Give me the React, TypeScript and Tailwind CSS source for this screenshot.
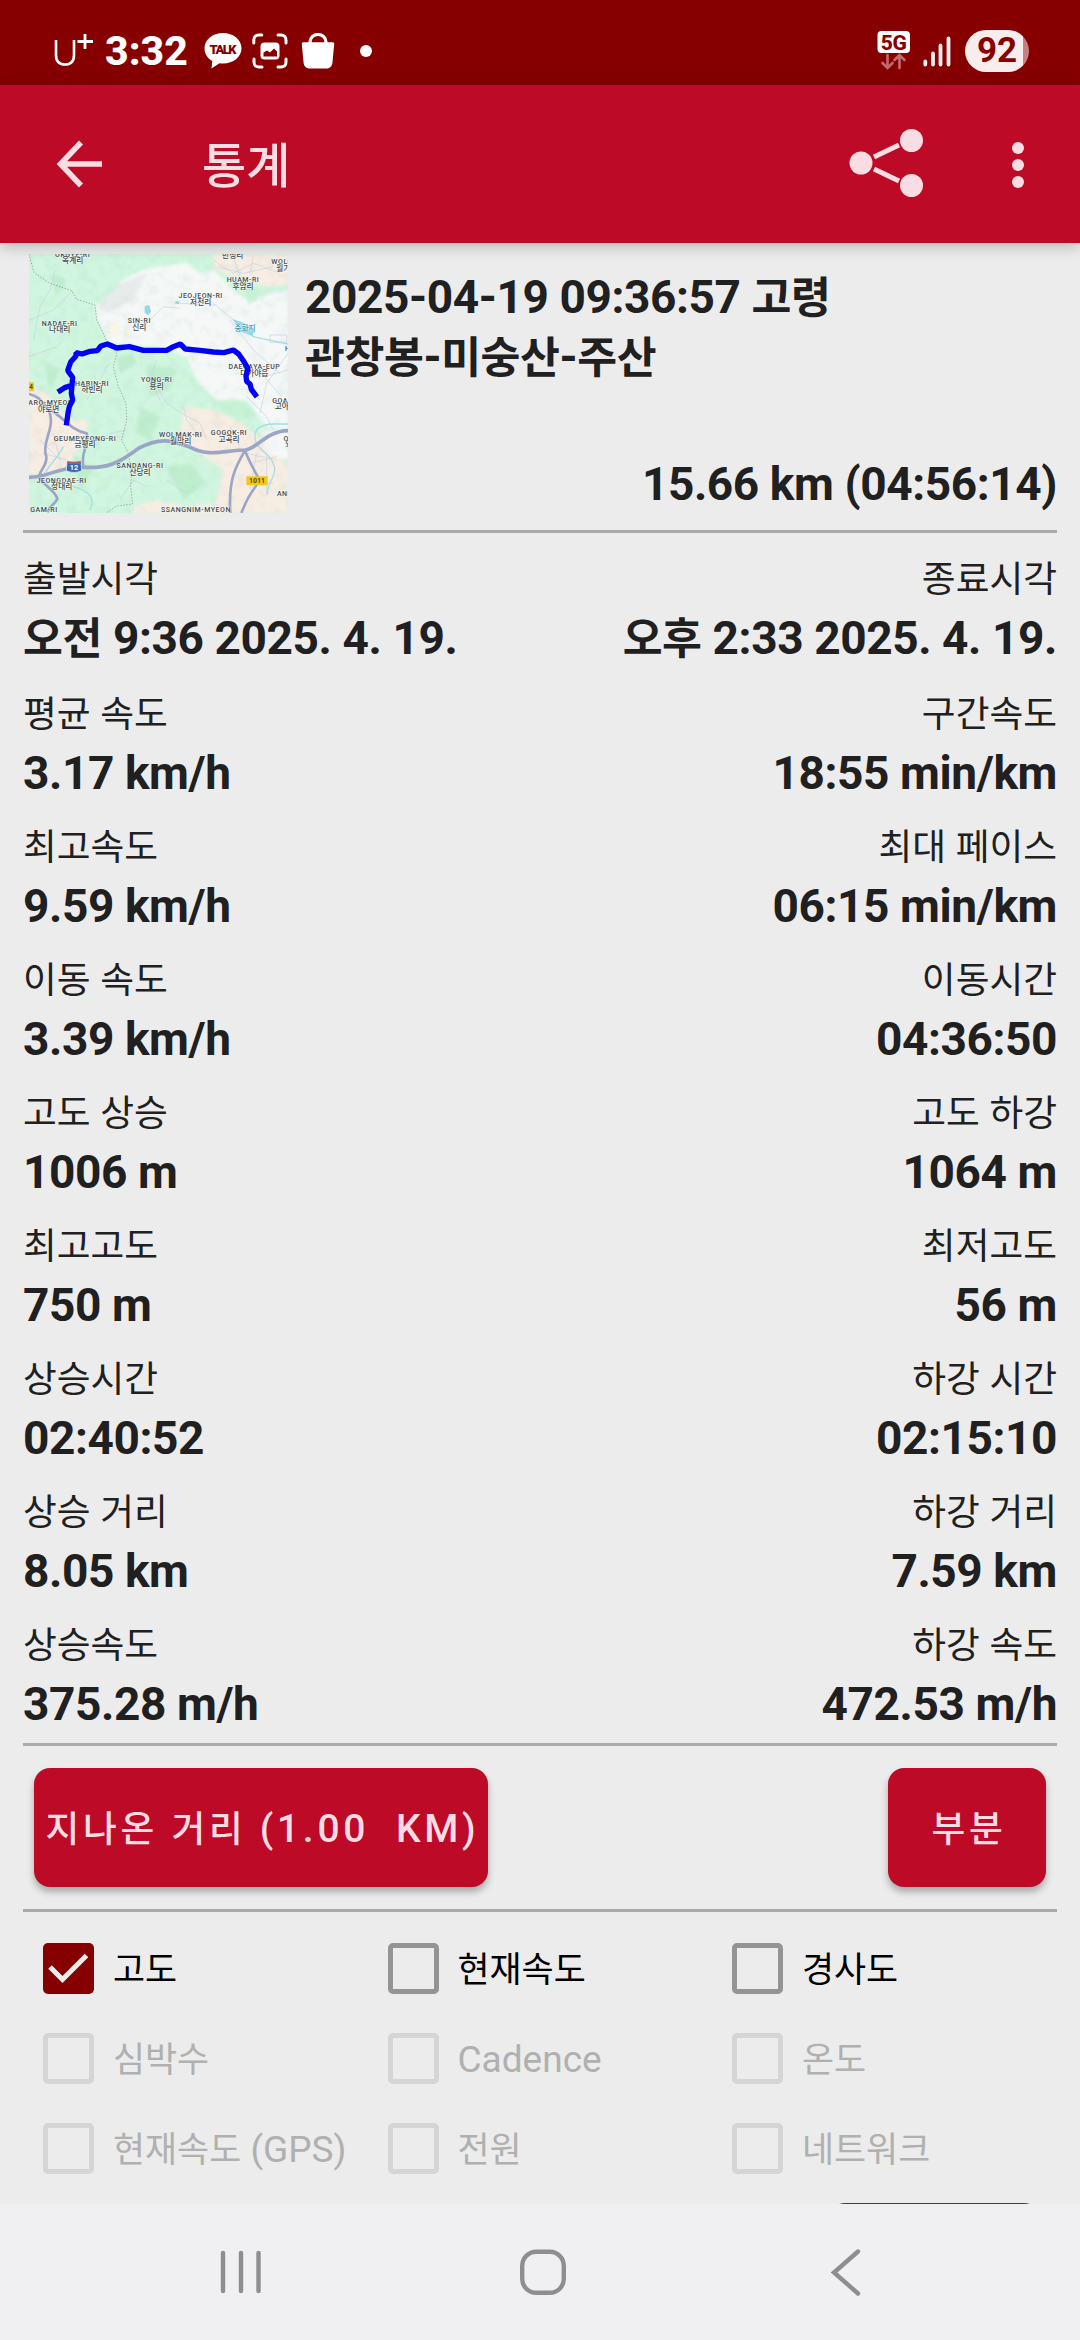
import clsx from "clsx";

type TStat = {
  label: string;
  value: string;
};

type TOption = {
  label: string;
  checked?: boolean;
  disabled?: boolean;
};

const stats: [TStat, TStat][] = [
  [
    { label: "출발시각", value: "오전 9:36 2025. 4. 19." },
    { label: "종료시각", value: "오후 2:33 2025. 4. 19." },
  ],
  [
    { label: "평균 속도", value: "3.17 km/h" },
    { label: "구간속도", value: "18:55 min/km" },
  ],
  [
    { label: "최고속도", value: "9.59 km/h" },
    { label: "최대 페이스", value: "06:15 min/km" },
  ],
  [
    { label: "이동 속도", value: "3.39 km/h" },
    { label: "이동시간", value: "04:36:50" },
  ],
  [
    { label: "고도 상승", value: "1006 m" },
    { label: "고도 하강", value: "1064 m" },
  ],
  [
    { label: "최고고도", value: "750 m" },
    { label: "최저고도", value: "56 m" },
  ],
  [
    { label: "상승시간", value: "02:40:52" },
    { label: "하강 시간", value: "02:15:10" },
  ],
  [
    { label: "상승 거리", value: "8.05 km" },
    { label: "하강 거리", value: "7.59 km" },
  ],
  [
    { label: "상승속도", value: "375.28 m/h" },
    { label: "하강 속도", value: "472.53 m/h" },
  ],
];

const options: TOption[] = [
  { label: "고도", checked: true },
  { label: "현재속도" },
  { label: "경사도" },
  { label: "심박수", disabled: true },
  { label: "Cadence", disabled: true },
  { label: "온도", disabled: true },
  { label: "현재속도 (GPS)", disabled: true },
  { label: "전원", disabled: true },
  { label: "네트워크", disabled: true },
];

// x, y, latin name, korean name
const places: [number, number, string, string][] = [
  [218, 50, "OKGYE-RI", "옥계리"],
  [698, 34, "", "반성리"],
  [850, 73, "WOLGI", "월기"],
  [729, 126, "HUAM-RI", "후암리"],
  [602, 175, "JEOJEON-RI", "저전리"],
  [179, 257, "NADAE-RI", "나대리"],
  [418, 250, "SIN-RI", "신리"],
  [763, 388, "DAEGAYA-EUP", "대가야읍"],
  [276, 437, "HABIN-RI", "하빈리"],
  [470, 427, "YONG-RI", "용리"],
  [146, 495, "YARO-MYEON", "야로면"],
  [856, 488, "GOA-RI", "고아리"],
  [255, 602, "GEUMPYEONG-RI", "금평리"],
  [542, 592, "WOLMAK-RI", "월막리"],
  [687, 585, "GOGOK-RI", "고곡리"],
  [420, 685, "SANDANG-RI", "산당리"],
  [185, 728, "JEONGDAE-RI", "정대리"],
  [868, 768, "ANRIM", ""],
  [132, 815, "GAM-RI", ""],
  [588, 815, "SSANGNIM-MYEON", ""],
  [870, 333, "HE", ""],
  [866, 602, "OS", "외"],
];

// Hangul is set a little smaller than the latin text around it
const Text = ({ children }: { children: string }) => (
  <>
    {children.split(/([가-힣]+)/).map((part, index) =>
      /[가-힣]/.test(part) ? (
        <span key={index} className="text-[0.942em] leading-[0]">
          {part}
        </span>
      ) : (
        part
      )
    )}
  </>
);

const StatusBar = () => (
  <div className="flex h-[85px] items-center justify-between bg-[#860000] pl-[53px] pr-[51px] pt-[17px] text-white">
    <div className="flex items-center">
      <svg width="40" height="36" viewBox="0 0 40 36" fill="none" stroke="#fff">
        <path d="M3 7v15c0 6 3 9.500 9 9.500s9-3.500 9-9.500V7" strokeWidth="2.600" />
        <path d="M32 1v15M24.500 8.500H40" strokeWidth="2.800" />
      </svg>
      <span className="ml-3 text-[41px] font-extrabold leading-[36px]">3:32</span>
      <svg className="ml-[16px]" width="38" height="36" viewBox="0 0 38 36">
        <path
          d="M19 0C8.500 0 .5 6.700.5 15.300c0 5.700 3.300 10.300 7.800 12.700L7.500 35.500l8-5.200c1.200.2 2.300.3 3.500.3 10.500 0 18.500-6.700 18.500-15.300S29.500 0 19 0Z"
          fill="#fff"
        />
        <text x="19" y="20.500" textAnchor="middle" fontSize="13" fontWeight="900" fill="#860000" textLength="27">
          TALK
        </text>
      </svg>
      <svg className="ml-[10px]" width="36" height="36" viewBox="0 0 36 36" fill="none" stroke="#fff" strokeWidth="3">
        <path d="M1.800 10V7c0-3 2-5 5-5h3M26 2h3c3 0 5 2 5 5v3M34 26v3c0 3-2 5-5 5h-3M10 34H7c-3 0-5-2-5-5v-3" strokeLinecap="round" />
        <rect x="8.500" y="9.500" width="19" height="17" rx="4" fill="#fff" stroke="none" />
        <path d="M11.500 23.500v-4l3.500-2 3 2 4-4 3 3v5Z" fill="#860000" stroke="none" />
      </svg>
      <svg className="ml-[13px]" width="34" height="36" viewBox="0 0 34 36">
        <path d="M.8 11c-.2-1 .4-1.800 1.500-1.800h29.400c1.100 0 1.700.8 1.500 1.800l-1.700 18c-.4 4.200-2.200 6.500-6.500 6.500H9c-4.300 0-6.100-2.300-6.500-6.500Z" fill="#fff" />
        <path d="M9 11V9a8 7.500 0 0 1 16 0v2" fill="none" stroke="#fff" strokeWidth="3.200" />
      </svg>
      <span className="ml-[25px] size-3 rounded-full bg-white" />
    </div>
    <div className="flex items-center">
      <svg width="34" height="40" viewBox="0 0 34 40">
        <rect x=".5" y="0" width="32.500" height="22" rx="4" fill="#fff" />
        <text x="16.800" y="18.500" textAnchor="middle" fontSize="21" fontWeight="800" fill="#860000" textLength="26">
          5G
        </text>
        <path d="M10.500 24v12M5.500 32l5 5 5-5M22.500 37V25M17.500 29l5-5 5 5" fill="none" stroke="#c26a6a" strokeWidth="2.600" strokeLinecap="round" />
      </svg>
      <svg className="ml-[12px]" width="28" height="32" viewBox="0 0 28 32" stroke="#fbeeee" strokeWidth="3.800" strokeLinecap="round">
        <path d="M2.300 26.500v3M10 18.500v11M17.500 10.500v19M25.500 3.500v26" />
      </svg>
      <span className="ml-[14px] flex h-[42px] w-16 items-center justify-center rounded-full bg-[linear-gradient(90deg,#f8eded_58px,#c97f7f_58px)] text-[35px] font-bold text-[#860000]">
        92
      </span>
    </div>
  </div>
);

const AppBar = () => (
  <header className="relative z-10 flex h-[158px] items-center bg-[#bd0a26] pl-[55px] pr-[56px] text-[#fadde2] shadow-[0_3px_14px_rgba(0,0,0,0.25)]">
    <svg width="48" height="48" viewBox="0 0 48 48" fill="none" stroke="currentColor" strokeWidth="5.600">
      <path d="M47 24H6M26 2.500 5.500 24 26 45.500" />
    </svg>
    <h1 className="ml-[99px] mt-[2px] text-[51px] font-medium leading-none">
      <Text>통계</Text>
    </h1>
    <svg className="ml-auto" width="76" height="72" viewBox="0 0 76 72" fill="currentColor">
      <circle cx="13" cy="35" r="11.500" />
      <circle cx="63.500" cy="12.500" r="11.500" />
      <circle cx="63.500" cy="57.500" r="11.500" />
      <path d="m26 29 25-12M26 41l25 12" stroke="currentColor" strokeWidth="5" />
    </svg>
    <div className="ml-[88px] flex flex-col gap-[5px] pt-px">
      <span className="size-3 rounded-full bg-current" />
      <span className="size-3 rounded-full bg-current" />
      <span className="size-3 rounded-full bg-current" />
    </div>
  </header>
);

const TrackMap = () => (
  <svg className="shrink-0" width="259" height="259" viewBox="87 42 777 777" fill="none">
    <defs>
      <filter id="soft" x="-20%" y="-20%" width="140%" height="140%">
        <feGaussianBlur stdDeviation="4" />
      </filter>
      <filter id="relief" x="0" y="0" width="100%" height="100%">
        <feTurbulence type="fractalNoise" baseFrequency="0.03" numOctaves="3" seed="7" />
        <feColorMatrix values="0 0 0 0 0.45  0 0 0 0 0.65  0 0 0 0 0.56  2.6 0 0 0 -1.15" />
      </filter>
    </defs>
    <rect x="87" y="42" width="777" height="777" fill="#d0f6df" />
    {/* terrain */}
    <g filter="url(#soft)">
      <path d="M285 195 350 155 352 130 420 92 500 75 560 70 600 100 640 90 700 150 740 180 864 150V570L800 560 740 480 660 490 590 420 560 350 480 320 330 310 290 230Z" fill="#f6f8f8" />
      <path d="M290 200 360 130 440 100 400 180 320 220Z" fill="#e8ebeb" />
      <path d="M640 42h224v90l-60 10-80-30-80-20Z" fill="#f8ede3" />
      <path d="M730 130 780 150 770 180 745 195Z" fill="#c6f3d6" />
      <path d="M330 260 350 240 360 270 340 300ZM375 270l10-10 2 30-14 10Z" fill="#fbf6e2" />
      <path d="M87 430 140 460 210 540 265 540 250 600 200 680 150 710 87 700Z" fill="#f8ede3" />
      <path d="M550 500 640 510 720 545 760 580 830 640 864 680V819H640L670 690 600 640 540 600Z" fill="#f8ede3" />
      <path d="M400 800 470 780 560 800 640 790V819H400Z" fill="#f8ede3" />
      <path d="M650 480 730 480 770 520 730 540 670 520Z" fill="#c6f3d6" />
      <path d="M780 570h84v90l-60-20Z" fill="#f6f8f8" />
      <path d="M350 350 400 340 410 370 360 400ZM440 370l90 20-20 60-60 20ZM420 500l60 30-30 70-40-20ZM220 640l60 50-40 60ZM130 360l50 30-30 60ZM150 100l50 20-30 50ZM500 680l70-10 50 60-70 50Z" fill="#bfeece" />
    </g>
    <rect x="87" y="42" width="777" height="777" filter="url(#relief)" opacity=".2" />
    {/* minor roads */}
    <g stroke="#c9d1e2" strokeWidth="2">
      <path d="M165 90 150 150 120 200 100 300M87 240 160 210 220 150M300 400 330 370 260 480M87 350 170 320 190 300M470 440 500 490 545 520 600 550 620 600M550 500 560 540 600 590M640 60l60 40 60-30 80 30M650 80l80 20 90-20M700 50l20 60M760 50l-10 50M690 240 760 330 840 400M740 470l60 60 20 40M864 340 800 430 780 520M864 390l-70 20 50 60M810 285h50v22h-50ZM640 190l60 50M540 190l110 5M430 260l60-60 50 5M120 600l60 60M140 620l50-30M160 580l20 80M130 640l70 20M740 640l90 20M750 670l80-20M740 720l80 10M770 640l-20 110M800 640v130M690 560l30 60M360 780l40-60 40 20M280 620l50-40 50-10M500 720l60 40 30-30M470 360l-20 60 30 60" />
    </g>
    {/* water */}
    <g stroke="#a5dde8" strokeWidth="4">
      <path d="M864 552h-40c-50 0-64 20-58 50 8 30 50 40 58 80 4 30-30 60-20 80M700 240l60 50 104 22M190 620c-20 40-50 60-60 90M220 740c40 10 70 30 50 70" />
    </g>
    <path d="m434 198 14-3 5 20-8 10-11-6ZM700 238l30 10 34 18-6 22-40-14ZM526 184h12v8h-12Z" fill="#8fd9ec" />
    {/* boundary */}
    <path d="M87 42 102 98 150 130 215 152 230 178 285 195 290 240 305 270 318 300 350 340 340 380 355 440 378 490 380 540 365 600 385 640 395 700 392 740 398 792 350 798 318 819" stroke="#8c9792" strokeWidth="2.500" strokeDasharray="4 5" />
    {/* highways */}
    <g stroke="#9ba6c6" strokeLinejoin="round">
      <path d="M87 712c60 0 80-30 160-30h40c60-4 90-30 130-58 60-30 90-26 150-4 60 34 110 10 170 10 40-8 60-56 127-58" strokeWidth="11" />
      <path d="M87 462c30 6 40 24 60 50 20 50-20 90-10 130 10 30-20 50-20 70 20 30 50 40 55 65-10 20-20 16-30 40M150 510c40 20 60 60 110 70 10 30-20 60-10 98M735 632c-30 50-50 90-44 187M735 632c20 50 30 60 44 90-30 40-40 60-55 97" strokeWidth="8" />
    </g>
    <g fontSize="21" fontWeight="500" fill="#43494c" stroke="#ffffff" strokeWidth="3" strokeOpacity=".7" paintOrder="stroke" textAnchor="middle" letterSpacing="1.600">
      {places.map(([x, y, name, korean]) => (
        <g key={`${x}-${y}`}>
          <text x={x} y={y}>
            {name}
          </text>
          <text x={x} y={y + 20} fontSize="23" letterSpacing="0">
            {korean}
          </text>
        </g>
      ))}
      <text x="735" y="272" fontSize="23" fill="#3a9bb0" letterSpacing="0">
        중화지
      </text>
    </g>
    <rect x="64" y="427" width="38" height="27" rx="3" fill="#f3c71f" />
    <text x="88" y="448" fontSize="19" fontWeight="700" fill="#5b4a10">
      4
    </text>
    <path d="M201 664c12 4 30 4 42 0l2 28c-14 7-32 7-46 0Z" fill="#3c66b0" stroke="#eef2f8" strokeWidth="2" />
    <path d="M202 663c12 3 28 3 40 0v9h-40Z" fill="#b0586a" />
    <text x="222" y="690" textAnchor="middle" fontSize="22" fontWeight="700" fill="#fff">
      12
    </text>
    <rect x="739" y="709" width="64" height="27" rx="3" fill="#f3c71f" />
    <text x="771" y="730" textAnchor="middle" fontSize="21" fontWeight="700" fill="#5b4a10">
      1011
    </text>
    {/* recorded track */}
    <path
      d="M200 548 204 520 208 500 218 480 214 460 216 436 196 442 180 452M216 436 218 412 203 392 212 366 228 348 228 338 246 342 270 334 292 332 303 318 322 312 350 324 388 320 430 331 500 331 520 320 541 312 556 327 600 331 640 336 672 338 700 330 716 342 730 362 744 386 738 408 740 424 750 432 754 448 766 464"
      stroke="#0202f5"
      strokeWidth="16"
      strokeLinejoin="bevel"
      strokeLinecap="square"
    />
  </svg>
);

const Checkbox = ({ label, checked, disabled }: TOption) => (
  <label
    className={clsx(
      "flex h-[51px] items-center gap-[19px] whitespace-nowrap text-[37px] leading-[48px]",
      disabled ? "text-[#b0b0b0]" : "text-black"
    )}
  >
    {checked ? (
      <svg width="51" height="51" viewBox="0 0 51 51" className="shrink-0 rounded-[5px] bg-[#860000]">
        <path d="m7 24 12.500 12.500L43.500 12.500" fill="none" stroke="#ececec" strokeWidth="5" />
      </svg>
    ) : (
      <span
        className={clsx(
          "size-[51px] shrink-0 rounded-[5px] border-[5px]",
          disabled ? "border-[#d5d5d5]" : "border-[#949494]"
        )}
      />
    )}
    <span className="pt-[2px]">
      <Text>{label}</Text>
    </span>
  </label>
);

const NavigationBar = () => (
  <nav className="flex h-[136px] items-center bg-[#f0f0f2] pl-[219px] text-[#8e8e8e]">
    <svg width="44" height="46" viewBox="0 0 44 46" stroke="currentColor" strokeWidth="4.400" strokeLinecap="round">
      <path d="M4 4v38M22 4v38M39.500 4v38" />
    </svg>
    <svg className="ml-[256px]" width="48" height="48" viewBox="0 0 48 48" fill="none" stroke="currentColor" strokeWidth="4.400">
      <rect x="3.200" y="3.800" width="41.600" height="41" rx="14" />
    </svg>
    <svg className="ml-[263px]" width="32" height="48" viewBox="0 0 32 48" fill="none" stroke="currentColor" strokeWidth="4.400" strokeLinecap="round">
      <path d="M28 3.500 4 24.500l24 21" />
    </svg>
  </nav>
);

const App = () => {
  return (
    <div className="flex h-[2340px] w-[1080px] flex-col overflow-hidden bg-[#ececec] font-[Roboto,'Noto_Sans_CJK_KR',sans-serif] text-[#202020]">
      <StatusBar />
      <AppBar />
      <main className="flex h-[1961px] flex-col overflow-hidden px-[23px]">
        <section className="flex h-[290px] shrink-0 gap-[17px] border-b-[3px] border-[#aaaaaa] pl-[6px] pt-[11px]">
          <TrackMap />
          <div className="flex grow flex-col text-[46px] font-bold leading-[60px] tracking-[-0.4px]">
            <h2 className="mt-[13px] w-[560px]">
              <Text>2025-04-19 09:36:57 고령 관창봉-미숭산-주산</Text>
            </h2>
            <p className="mt-[67px] text-right">15.66 km (04:56:14)</p>
          </div>
        </section>
        <section className="flex h-[1213px] shrink-0 flex-col gap-[17px] border-b-[3px] border-[#aaaaaa] pt-[19px]">
          {stats.map((row, index) => (
            <div key={index} className="flex justify-between first:mb-[2px]">
              {row.map((stat) => (
                <div key={stat.label} className="flex flex-col gap-[2px] last:text-right">
                  <span className="text-[39px] leading-[54px]">
                    <Text>{stat.label}</Text>
                  </span>
                  <span className="text-[46px] font-bold leading-[60px] tracking-[-0.4px]">
                    <Text>{stat.value}</Text>
                  </span>
                </div>
              ))}
            </div>
          ))}
        </section>
        <section className="flex h-[166px] shrink-0 items-start justify-between border-b-[3px] border-[#aaaaaa] px-[11px] pt-[22px] text-[39px] font-medium tracking-[3.7px] text-[#fcdce2]">
          <button className="h-[119px] w-[454px] whitespace-pre rounded-2xl bg-[#bd0a26] pl-[3px] pt-[3px] shadow-[0_5px_7px_rgba(0,0,0,0.28)]">
            <Text>{"지나온 거리 (1.00  KM)"}</Text>
          </button>
          <button className="h-[119px] w-[158px] rounded-2xl bg-[#bd0a26] pl-[4px] pt-[3px] shadow-[0_5px_7px_rgba(0,0,0,0.28)]">
            <Text>부분</Text>
          </button>
        </section>
        <section className="grid shrink-0 grid-cols-[344.500px_344.500px_1fr] gap-y-[39px] pl-[20px] pt-[31px]">
          {options.map((option) => (
            <Checkbox key={option.label} {...option} />
          ))}
        </section>
        <div className="ml-auto mr-[17px] mt-[29px] h-[119px] w-[211px] shrink-0 rounded-2xl bg-[#a01030]" />
      </main>
      <NavigationBar />
    </div>
  );
};

export default App;
